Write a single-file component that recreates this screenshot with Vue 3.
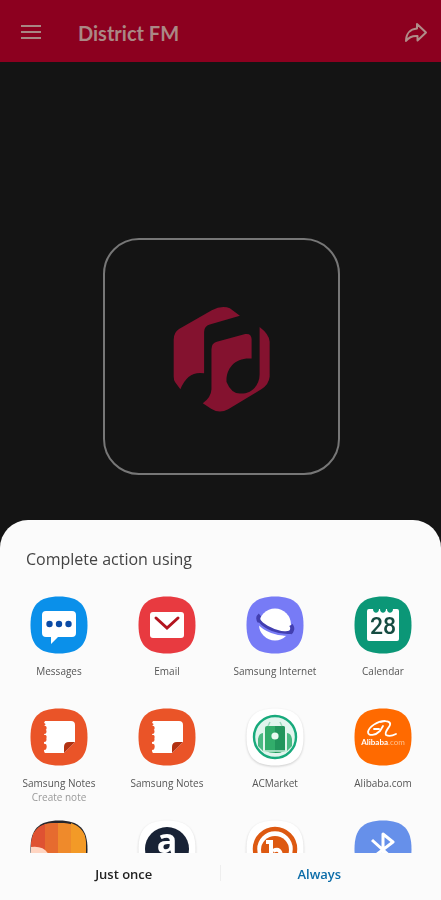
<script setup>
const apps = [
  { id: 'messages', label: 'Messages' },
  { id: 'email', label: 'Email' },
  { id: 'internet', label: 'Samsung Internet' },
  { id: 'calendar', label: 'Calendar' },
  { id: 'notes', label: 'Samsung Notes', detail: 'Create note' },
  { id: 'notes', label: 'Samsung Notes' },
  { id: 'acmarket', label: 'ACMarket' },
  { id: 'alibaba', label: 'Alibaba.com' },
  { id: 'stripes' },
  { id: 'amazon' },
  { id: 'bitmoji' },
  { id: 'bluetooth' },
]
const fills = {
  messages: '#0a90ea',
  email: '#e83a40',
  internet: '#777bf6',
  calendar: '#0b9777',
  notes: '#ea5428',
  acmarket: '#ffffff',
  alibaba: '#ff6a00',
  stripes: '#26262c',
  amazon: '#ffffff',
  bitmoji: '#ffffff',
  bluetooth: '#6690ea',
}
const squircle = 'M29 0.5C49 0.5 57.5 9 57.5 29S49 57.5 29 57.5 0.5 49 0.5 29 9 0.5 29 0.5Z'
</script>

<template>
  <div class="page">
    <header class="bar">
      <button class="icon-button" type="button" aria-label="Menu">
        <svg width="22" height="18" viewBox="0 0 22 18" fill="none" stroke="#a88683" stroke-width="2">
          <path d="M1 2H21M1 8H21M1 14H21" />
        </svg>
      </button>
      <h1>District FM</h1>
      <button class="icon-button" type="button" aria-label="Share">
        <svg width="24" height="22" viewBox="0 0 24 22" fill="none" stroke="#b08c89" stroke-width="2" stroke-linejoin="round">
          <path d="M13 2L22 10.5L13.5 18.5V14C8 13.5 5 15 2 19C2 12 6 7 13 6.5Z" />
        </svg>
      </button>
    </header>

    <main class="player">
      <div class="artwork">
        <svg width="97" height="105" viewBox="40 38 290 314" fill="#84122f" role="img" aria-label="District FM logo">
          <path d="M62 284L46 262Q42 256 42 246V136Q42 114 58 104L156 48Q186 32 210 42L240 64L150 90Q133 95 133 112V236Q84 228 62 284Z" />
          <path d="M129 326Q154 308 155 284V164Q155 146 171 142L256 119Q274 116 275 134V192C225 188 198 222 200 262Q214 296 240 297C278 298 299 270 299 240V98Q328 120 329 142V246Q327 270 304 284L205 344Q178 358 154 342Z" />
        </svg>
      </div>
    </main>

    <section class="sheet" role="dialog" aria-labelledby="sheet-title">
      <h2 id="sheet-title">Complete action using</h2>
      <div class="apps">
        <button v-for="(app, i) in apps" :key="i" class="app" type="button" :aria-label="app.label || app.id">
          <svg class="app-icon" :class="{ light: fills[app.id] === '#ffffff' }" viewBox="0 0 58 58">
            <path :d="squircle" :fill="fills[app.id]" />
            <g v-if="app.id === 'messages'">
              <path d="M16 15H42Q46 15 46 19V37Q46 41 42 41H28L21 48V41H16Q12 41 12 37V19Q12 15 16 15Z" fill="#fff" />
              <g fill="#0b4ba6"><circle cx="19.5" cy="28" r="3.2" /><circle cx="29" cy="28" r="3.2" /><circle cx="38.5" cy="28" r="3.2" /></g>
            </g>
            <g v-else-if="app.id === 'email'">
              <rect x="12" y="16" width="34" height="26" rx="3" fill="#fff" />
              <path d="M18 22L29 32L40 22" fill="none" stroke="#b3141f" stroke-width="3" stroke-linecap="round" />
            </g>
            <g v-else-if="app.id === 'internet'">
              <circle cx="29" cy="28.5" r="16" fill="#fff" />
              <path d="M14 19C9 23 15 29 24 33C34 38 45 39 46 34Q47 32 45 29" fill="none" stroke="#423fb0" stroke-width="4" />
              <path d="M12 27C18 34 31 40 45 39" fill="none" stroke="#777bf6" stroke-width="2" />
            </g>
            <g v-else-if="app.id === 'calendar'">
              <path d="M15 13H19C19 18 25 18 25 13H26C26 18 32 18 32 13H33C33 18 39 18 39 13H43Q45 13 45 15V43Q45 45 43 45H15Q13 45 13 43V15Q13 13 15 13Z" fill="#fff" />
              <text class="date" x="29" y="38" text-anchor="middle">28</text>
            </g>
            <g v-else-if="app.id === 'notes'">
              <path d="M15 13H41Q45 13 45 17V34L34 45H15Q14 45 14 42A2.5 2.5 0 0 0 14 37V34A2.5 2.5 0 0 0 14 29V26A2.5 2.5 0 0 0 14 21V18Q17 16 14 15Z" fill="#fff" />
              <path d="M45 34L34 45V39Q34 34 39 34Z" fill="#b23212" />
              <g fill="#ea5428"><circle cx="14.5" cy="20" r="2.2" /><circle cx="14.5" cy="29" r="2.2" /><circle cx="14.5" cy="38" r="2.2" /></g>
            </g>
            <g v-else-if="app.id === 'acmarket'">
              <circle cx="29" cy="29" r="21" fill="#e2f5ee" stroke="#18aa7c" stroke-width="2.4" />
              <path d="M21 18H37Q39 18 39 20V43Q29 47 19 43V20Q19 18 21 18Z" fill="#32ad6b" />
              <path d="M29 18H37Q39 18 39 20V43Q34 45 29 45Z" fill="#22955c" />
              <path d="M17 25Q13 25 12 31V38L17 43ZM41 25Q45 25 46 31V38L41 43Z" fill="#4ab982" />
              <path d="M22 18L24 14M36 18L34 14" stroke="#9bd8bc" stroke-width="1.5" />
              <circle cx="29" cy="28" r="3.6" fill="#e8faf0" />
              <path d="M17 43H41" stroke="#c7eeda" stroke-width="1.5" />
            </g>
            <g v-else-if="app.id === 'alibaba'">
              <path d="M31 13C23 13 15 19 14 24C14 29 22 27 26 23L29 18M20 21H25M27 14C33 12 37 14 36 17C35 20 30 24 32 27C34 28 38 28 42 26" fill="none" stroke="#fff" stroke-width="1.8" stroke-linecap="round" stroke-linejoin="round" />
              <text class="brand" x="29" y="37" text-anchor="middle">Alibaba<tspan class="faint">.com</tspan></text>
            </g>
            <g v-else-if="app.id === 'stripes'">
              <path d="M3 14Q10 3 24 3H34Q50 4 55 16V45H3Z" fill="#ef8a2b" />
              <path d="M1 22Q3 8 15 4V40H1Z" fill="#df5232" />
              <path d="M15 4Q20 3 28 3V40H15Z" fill="#e66b2f" />
              <path d="M41 3Q55 8 56 22V40H41Z" fill="#f39a27" />
              <path d="M1 27Q16 25 20 38H1Z" fill="#ffd5c2" />
            </g>
            <g v-else-if="app.id === 'amazon'">
              <circle cx="29" cy="29" r="22" fill="#182235" />
              <text class="letter" x="29" y="33" text-anchor="middle">a</text>
            </g>
            <g v-else-if="app.id === 'bitmoji'">
              <circle cx="29" cy="29" r="20" fill="#fff" stroke="#dd5911" stroke-width="4.5" />
              <circle cx="29" cy="30" r="14" fill="#dd5911" />
              <path d="M20 22H25V39M27 31Q35 27 35 37" fill="none" stroke="#fff" stroke-width="4" />
            </g>
            <g v-else>
              <path d="M18 20L39 39L29 47V14L39 22L18 38" fill="none" stroke="#fff" stroke-width="3" stroke-linejoin="round" />
            </g>
          </svg>
          <span v-if="app.label" class="label">{{ app.label }}</span>
          <span v-if="app.detail" class="detail">{{ app.detail }}</span>
        </button>
      </div>
      <footer class="actions">
        <button type="button">Just once</button>
        <button type="button" class="primary">Always</button>
      </footer>
    </section>
  </div>
</template>

<style>
body {
  margin: 0;
  background: #141414;
}
</style>

<style scoped>
.page {
  min-height: 100vh;
  background: #141414;
  font-family: "Open Sans", sans-serif;
}
button {
  padding: 0;
  border: 0;
  background: none;
  font-family: inherit;
  cursor: pointer;
}
.bar {
  display: flex;
  align-items: center;
  height: 62px;
  padding: 4px 13px 0 20px;
  box-sizing: border-box;
  background: #8c001f;
}
.icon-button {
  display: flex;
}
.bar h1 {
  flex: 1;
  margin: 0 0 0 36px;
  color: #aa8885;
  font: 700 20px/28px Lato, sans-serif;
}
.player {
  display: flex;
  justify-content: center;
  padding: 176px 0 0 2px;
}
.artwork {
  display: flex;
  align-items: center;
  justify-content: center;
  width: 54%;
  max-width: 400px;
  aspect-ratio: 1;
  box-sizing: border-box;
  padding-top: 6px;
  border: 2px solid #777;
  border-radius: 36px;
}
.sheet {
  position: fixed;
  right: 0;
  bottom: 0;
  left: 0;
  border-radius: 28px 28px 0 0;
  background: #fbfbfb;
}
.sheet h2 {
  margin: 0;
  padding: 26px 26px 24px;
  color: #444;
  font-size: 16px;
  font-weight: 400;
  line-height: 26px;
}
.apps {
  display: grid;
  grid-template-columns: repeat(4, 1fr);
  grid-auto-rows: 112px;
  max-height: 257px;
  padding: 0 4px 0 5px;
  overflow-y: auto;
  scrollbar-width: none;
}
.app {
  display: flex;
  flex-direction: column;
  align-items: center;
}
.app-icon {
  flex: none;
  width: 58px;
  height: 58px;
}
.light {
  filter: drop-shadow(0 1px 1px #ccc);
}
.label {
  margin-top: 10px;
  color: #555;
  font-size: 10px;
  line-height: 14px;
}
.detail {
  color: #999;
  font-size: 10px;
  line-height: 14px;
}
.date {
  fill: #164c42;
  font: 500 23px Roboto, sans-serif;
}
.brand {
  fill: #fff;
  font: 700 8px Lato, sans-serif;
}
.faint {
  fill: #ffc08c;
  font-weight: 400;
}
.letter {
  fill: #fff;
  font: 700 34px "Open Sans", sans-serif;
}
.actions {
  display: grid;
  grid-template-columns: 1fr 1fr;
  height: 47px;
  padding: 0 24px 6px 26px;
  box-sizing: border-box;
  background: linear-gradient(#eee, #eee) center 12px / 1px 16px no-repeat;
}
.actions button {
  color: #222;
  font-size: 13px;
  font-weight: 600;
}
.actions .primary {
  color: #0b6ca8;
}
</style>
